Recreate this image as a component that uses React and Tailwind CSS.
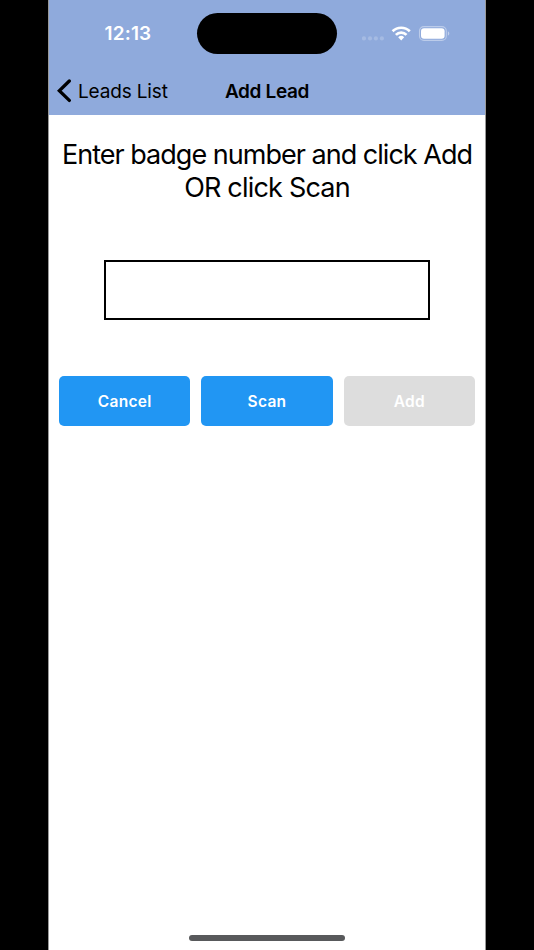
import React, { useState } from "react";

function StatusBar() {
  return (
    <div className="flex h-[66px] pt-[13px] text-white">
      <div className="flex h-[41px] w-[148px] items-center pl-[55.5px] text-[19px] font-semibold leading-none tracking-[0.15px]">
        12:13
      </div>

      {/* Dynamic island */}
      <div className="h-[41px] w-[140px] rounded-full bg-black" />

      <div className="flex h-[41px] flex-1 items-center pl-[25px]">
        <svg width="88" height="16" viewBox="0 0 88 16" fill="none">
          {/* Cellular */}
          <g fill="#fff" fillOpacity="0.2">
            <circle cx="2" cy="12.4" r="2.1" />
            <circle cx="8" cy="12.4" r="2.1" />
            <circle cx="13.9" cy="12.4" r="2.1" />
            <circle cx="19.9" cy="12.4" r="2.1" />
          </g>
          {/* Wifi */}
          <g stroke="#fff" strokeWidth="2.7">
            <path d="M30.6 5.3a12.2 12.2 0 0 1 17.2 0" />
            <path d="M33.9 8.9a7.5 7.5 0 0 1 10.6 0" />
          </g>
          <path d="M36.2 11.3a4.3 4.3 0 0 1 6 0l-3 3.1z" fill="#fff" />
          {/* Battery */}
          <rect x="57.5" y="0.6" width="26.8" height="13.8" rx="4.4" stroke="#fff" strokeOpacity="0.4" strokeWidth="1.1" />
          <rect x="59" y="2.2" width="23.6" height="10.6" rx="3" fill="#fff" />
          <path d="M85.9 5.3c1.9.8 1.9 3.6 0 4.4z" fill="#fff" fillOpacity="0.45" />
        </svg>
      </div>
    </div>
  );
}

function NavBar({ title, back }) {
  return (
    <div className="grid h-[49px] grid-cols-[1fr_auto_1fr] items-center text-black">
      <button className="flex items-center gap-[7px] pl-[8px] text-[19px] leading-none">
        <svg width="14" height="24" viewBox="0 0 14 24" fill="none">
          <path d="M12.3 2 2.3 11.7l10 9.7" stroke="#000" strokeWidth="3.3" strokeLinecap="round" />
        </svg>
        <span className="pt-[2px] tracking-[-0.15px]">{back}</span>
      </button>
      <h1 className="pt-[2px] text-[19px] font-semibold leading-none tracking-[-0.35px]">{title}</h1>
    </div>
  );
}

function Button({ children, disabled, onClick }) {
  return (
    <button
      disabled={disabled}
      onClick={onClick}
      className={
        "h-[50px] flex-1 rounded-[5px] pt-[2px] text-[15.5px] font-semibold tracking-[0.3px] text-white " +
        (disabled ? "bg-[#dddddd]" : "bg-[#2196f3]")
      }
    >
      {children}
    </button>
  );
}

function App() {
  const [badge, setBadge] = useState("");

  return (
    <div className="h-[950px] bg-black font-['Inter','Liberation_Sans',sans-serif]">
      <div className="mx-auto flex h-full w-[438px] flex-col border-x border-[#999999] bg-white">
        {/* Header */}
        <div className="h-[115px] bg-[#8faadc]">
          <StatusBar />
          <NavBar title="Add Lead" back="Leads List" />
        </div>

        {/* Content */}
        <p className="mt-[23px] text-center text-[27px] leading-[33px] tracking-[-0.98px] text-black">
          Enter badge number and click Add
          <br />
          <span className="tracking-[-0.8px]">OR click Scan</span>
        </p>
        <input
          aria-label="Badge number"
          value={badge}
          onChange={(e) => setBadge(e.target.value)}
          className="mx-auto mt-[56px] h-[60px] w-[326px] border-2 border-black px-3 text-xl outline-none"
        />
        <div className="mt-[56px] flex gap-[11px] px-[10px]">
          <Button onClick={() => setBadge("")}>Cancel</Button>
          <Button>Scan</Button>
          <Button disabled={!badge}>Add</Button>
        </div>

        {/* Home indicator */}
        <div className="mx-auto mb-[9px] mt-auto h-[6px] w-[156px] rounded-full bg-[#58595b]" />
      </div>
    </div>
  );
}

export default App;
